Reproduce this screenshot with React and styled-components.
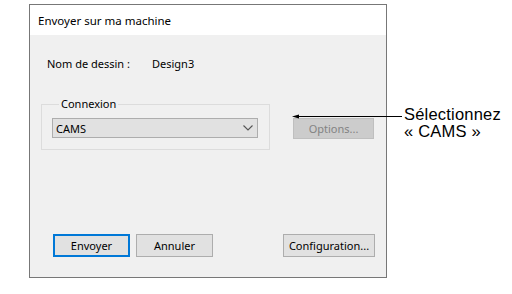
import styled, { createGlobalStyle } from 'styled-components';

const GlobalStyle = createGlobalStyle`
	html, body {
		margin: 0;
		padding: 0;
		background: #fff;
	}
	body {
		font-family: 'Noto Sans', 'Liberation Sans', sans-serif;
	}
`;

const Stage = styled.div`
	position: relative;
	width: 512px;
	height: 294px;
	padding: 4px 0 0 29px;
	box-sizing: border-box;
`;

const Dialog = styled.div`
	width: 358px;
	height: 274px;
	box-sizing: border-box;
	border: 1px solid #777;
	background: #f0f0f0;
	display: flex;
	flex-direction: column;
	font-size: 11px;
	color: #000;
`;

const TitleBar = styled.div`
	height: 30px;
	background: #fff;
	display: flex;
	align-items: center;
	padding-left: 8px;
	font-size: 11.5px;
`;

const Body = styled.div`
	flex: 1;
	display: flex;
	flex-direction: column;
	padding: 22px 11px 20px 11px;
`;

const InfoRow = styled.div`
	display: flex;
	line-height: 14px;
	padding-left: 6px;
	span:first-child {
		width: 105px;
	}
`;

const ConnRow = styled.div`
	display: flex;
	align-items: flex-start;
	margin-top: 26px;
`;

const GroupBox = styled.fieldset`
	width: 229px;
	box-sizing: border-box;
	margin: 0;
	padding: 7px 11px 11px 10px;
	border: 1px solid #dcdcdc;
	legend {
		padding: 0 2px;
		margin-left: 7px;
		line-height: 14px;
	}
`;

const Select = styled.div`
	height: 20px;
	box-sizing: border-box;
	border: 1px solid #adadad;
	background: #e1e1e1;
	display: flex;
	align-items: center;
	justify-content: space-between;
	padding: 0 4px 0 3px;
	svg {
		display: block;
	}
`;

const Button = styled.div`
	height: ${(p) => p.$h || 23}px;
	width: ${(p) => p.$w}px;
	box-sizing: border-box;
	border: ${(p) => (p.$focus ? '2px solid #0078d7' : `1px solid ${p.$disabled ? '#bfbfbf' : '#adadad'}`)};
	background: ${(p) => (p.$disabled ? '#cccccc' : '#e1e1e1')};
	color: ${(p) => (p.$disabled ? '#838383' : '#000')};
	display: flex;
	align-items: center;
	justify-content: center;
`;

const OptionsButton = styled(Button)`
	margin: 21px 0 0 23px;
`;

const ButtonRow = styled.div`
	margin-top: auto;
	display: flex;
	gap: 6px;
	padding-left: 12px;
	${Button}:last-child {
		margin-left: auto;
	}
`;

const Callout = styled.div`
	position: absolute;
	left: 292px;
	top: 106px;
	display: flex;
	align-items: flex-start;
	gap: 2px;
	font: 16.5px/17px 'Liberation Sans', Arial, sans-serif;
	letter-spacing: 0.2px;
	color: #000;
	svg {
		display: block;
	}
`;

function App() {
	return (
		<Stage>
			<GlobalStyle />
			<Dialog>
				<TitleBar>Envoyer sur ma machine</TitleBar>
				<Body>
					<InfoRow>
						<span>Nom de dessin :</span>
						<span>Design3</span>
					</InfoRow>

					<ConnRow>
						<GroupBox>
							<legend>Connexion</legend>
							<Select>
								CAMS
								<svg width='10' height='6' viewBox='0 0 10 6'>
									<path d='M0.5 0.5 L5 5 L9.5 0.5' fill='none' stroke='#555' strokeWidth='1.1' />
								</svg>
							</Select>
						</GroupBox>
						<OptionsButton $w={81} $h={21} $disabled>
							Options...
						</OptionsButton>
					</ConnRow>

					<ButtonRow>
						<Button $w={77} $focus>
							Envoyer
						</Button>
						<Button $w={77}>Annuler</Button>
						<Button $w={92}>Configuration...</Button>
					</ButtonRow>
				</Body>
			</Dialog>

			{/* annotation arrow pointing at the dialog */}
			<Callout>
				<svg width='110' height='17' viewBox='0 0 110 17'>
					<line x1='2' y1='10.5' x2='110' y2='10.5' stroke='#000' strokeWidth='1' />
					<path d='M0 10.5 L7 8.5 L7 12.5 Z' fill='#000' />
				</svg>
				<div>
					Sélectionnez
					<br />« CAMS »
				</div>
			</Callout>
		</Stage>
	);
}

export default App;
